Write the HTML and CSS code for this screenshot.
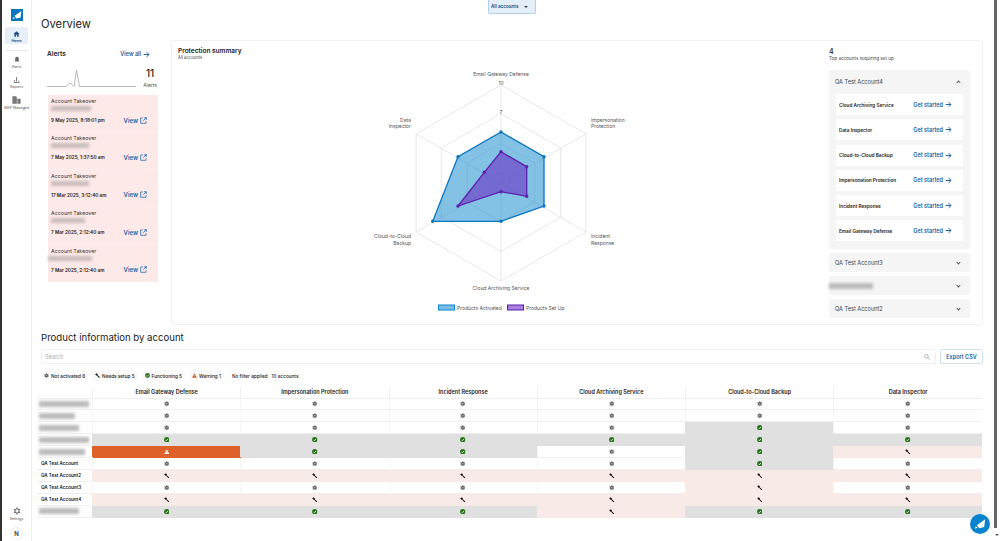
FILE: index.html
```html
<!DOCTYPE html>
<html lang="en">
<head>
    <meta charset="UTF-8">
    <meta name="viewport" content="width=device-width, initial-scale=1.0">
    <title>Overview</title>
    <link rel="stylesheet" href="styles.css">
</head>
<body>
    <svg class="defs" width="0" height="0">
        <symbol id="i-gear" viewBox="0 0 10 10"><circle cx="5" cy="5" r="3.7" fill="#666"/><circle cx="5" cy="5" r="1.2" fill="#c4c4c4"/><path d="M5 0.2V2M5 8V9.8M0.8 2.6L2.4 3.6M7.6 6.4L9.2 7.4M0.8 7.4L2.4 6.4M7.6 3.6L9.2 2.6" stroke="#666" stroke-width="1.3"/></symbol>
        <symbol id="i-gear-line" viewBox="0 0 10 10"><circle cx="5" cy="5" r="2.7" fill="none" stroke="#555" stroke-width="1.2"/><path d="M5 0.4V2.2M5 7.8V9.6M1 2.7L2.6 3.6M7.4 6.4L9 7.3M1 7.3L2.6 6.4M7.4 3.6L9 2.7" stroke="#555" stroke-width="1.1"/></symbol>
        <symbol id="i-ok" viewBox="0 0 10 10"><circle cx="5" cy="5" r="4.9" fill="#2a741c"/><path d="M2.6 5.1L4.3 6.8L7.4 3.5" fill="none" stroke="#e8f2e4" stroke-width="1.5"/></symbol>
        <symbol id="i-tool" viewBox="0 0 10 10"><path d="M0.4 2.4L3 0.4L5.6 2.6L5 4L9.8 8.2L8.2 9.8L3.8 5.2L2.4 5.2Z" fill="#1c1c1c"/></symbol>
        <symbol id="i-warn" viewBox="0 0 10 10"><path d="M5 0.6L9.8 9.4H0.2Z" fill="#d9541e"/><path d="M5 3.6V6.4M5 7.2V8.2" stroke="#fff" stroke-width="1"/></symbol>
        <symbol id="i-warn-w" viewBox="0 0 10 10"><path d="M5 0.6L9.8 9.4H0.2Z" fill="#fff"/><path d="M5 3.6V6.4M5 7.2V8.2" stroke="#e0602a" stroke-width="1"/></symbol>
        <symbol id="i-arrow" viewBox="0 0 10 10"><path d="M1 5H8.4M5.2 1.6L8.6 5L5.2 8.4" fill="none" stroke="#1b5fa5" stroke-width="1.4"/></symbol>
        <symbol id="i-open" viewBox="0 0 10 10"><path d="M4 1.4H1V9H8.6V6M5.6 1H9V4.4M9 1L4.6 5.4" fill="none" stroke="#1b6cb5" stroke-width="1.1"/></symbol>
        <symbol id="i-logo" viewBox="0 0 12 12"><path d="M1.6 10L2.4 8L4 9.2Z M3.4 7L10.4 2L9.6 8.6L5.4 9.6Z" fill="#fff"/></symbol>
    </svg>

    <div class="layout">
        <nav class="sidebar">
            <div class="logo"><svg width="12" height="12"><use href="#i-logo"/></svg></div>
            <div class="nav-item active">
                <svg width="7" height="7" viewBox="0 0 10 10"><path d="M5 0.5L10 5H8.6V9.6H6V6.4H4V9.6H1.4V5H0Z" fill="#1b4f8a"/></svg>
                <span>Home</span>
            </div>
            <div class="nav-line"></div>
            <div class="nav-item">
                <svg width="6" height="7" viewBox="0 0 10 10"><path d="M5 0.5C7.4 0.5 8 2.4 8 4.4V7L9.4 8.4H0.6L2 7V4.4C2 2.4 2.6 0.5 5 0.5Z" fill="#666"/></svg>
                <span>Alerts</span>
            </div>
            <div class="nav-item">
                <svg width="7" height="7" viewBox="0 0 10 10"><path d="M1 9.4H9.6M2 8V5.6M5 8V1.6M8 8V6.6" stroke="#666" stroke-width="1.2" fill="none"/></svg>
                <span>Reports</span>
            </div>
            <div class="nav-item">
                <svg width="9" height="8" viewBox="0 0 10 9"><path d="M0.4 0.4H4.6L5.4 1.6V8.6H0.4ZM6 3H9.6V8.6H6Z" fill="#777"/></svg>
                <span>MSP Managed</span>
            </div>
            <div class="nav-bottom">
                <div class="nav-item">
                    <svg width="8" height="8"><use href="#i-gear-line"/></svg>
                    <span>Settings</span>
                </div>
                <div class="avatar">N</div>
            </div>
        </nav>

        <main class="main">
            <div class="account-picker">All accounts <span class="caret"></span></div>
            <h1 class="page-title">Overview</h1>

            <div class="top-row">
                <section class="alerts">
                    <div class="alerts-head">
                        <h2>Alerts</h2>
                        <span class="link">View all <svg width="7" height="7"><use href="#i-arrow"/></svg></span>
                    </div>
                    <div class="alerts-chart">
                        <svg width="89" height="20" viewBox="0 0 89 20">
                            <path d="M0 18.5H19L23 15L25.5 17L27 18.5L29.5 2L32.5 18.5H89" fill="none" stroke="#aaa" stroke-width="0.8"/>
                        </svg>
                        <div class="alerts-count"><b>11</b><span>Alerts</span></div>
                    </div>
                    <div class="alert-list">
                        <div class="alert">
                            <div class="alert-name">Account Takeover</div>
                            <div class="blur blur-alert w40"></div>
                            <div class="alert-foot"><b>9 May 2025, 8:18:01 pm</b><span class="alert-view">View <svg width="7" height="7"><use href="#i-open"/></svg></span></div>
                        </div>
                        <div class="alert">
                            <div class="alert-name">Account Takeover</div>
                            <div class="blur blur-alert w38"></div>
                            <div class="alert-foot"><b>7 May 2025, 1:37:50 am</b><span class="alert-view">View <svg width="7" height="7"><use href="#i-open"/></svg></span></div>
                        </div>
                        <div class="alert">
                            <div class="alert-name">Account Takeover</div>
                            <div class="blur blur-alert w38"></div>
                            <div class="alert-foot"><b>17 Mar 2025, 3:12:40 am</b><span class="alert-view">View <svg width="7" height="7"><use href="#i-open"/></svg></span></div>
                        </div>
                        <div class="alert">
                            <div class="alert-name">Account Takeover</div>
                            <div class="blur blur-alert w34"></div>
                            <div class="alert-foot"><b>7 Mar 2025, 2:12:40 am</b><span class="alert-view">View <svg width="7" height="7"><use href="#i-open"/></svg></span></div>
                        </div>
                        <div class="alert">
                            <div class="alert-name">Account Takeover</div>
                            <div class="blur blur-alert w44"></div>
                            <div class="alert-foot"><b>7 Mar 2025, 2:12:40 am</b><span class="alert-view">View <svg width="7" height="7"><use href="#i-open"/></svg></span></div>
                        </div>
                    </div>
                </section>

                <section class="summary">
                    <div class="summary-left">
                        <h2>Protection summary</h2>
                        <div class="small tiny">All accounts</div>
                    </div>
                    <div class="radar">
                        <svg width="300" height="250" viewBox="350 70 300 250">
                            <g fill="none" stroke="#e2e2e2" stroke-width="0.8">
                                <polygon points="501,85 585.9,134 585.9,232 501,281 416.1,232 416.1,134"/>
                                <polygon points="501,113.5 560.7,148 560.7,217 501,251.5 441.3,217 441.3,148"/>
                                <polygon points="501,143.5 534.8,163 534.8,202 501,221.5 467.2,202 467.2,163"/>
                                <polygon points="501,172 509.7,177 509.7,188 501,193 492.3,188 492.3,177"/>
                                <path d="M501 85V281M416.1 134L585.9 232M585.9 134L416.1 232"/>
                            </g>
                            <polygon points="501,132 544,156.7 544,206 501,221.3 432.7,221.3 458,156.7" fill="#0a86cc" fill-opacity="0.5" stroke="#0a76bd" stroke-width="1.3"/>
                            <polygon points="501,151.7 526.7,166.7 526.7,196.3 501,191.7 458,206 484.3,172.3" fill="#6a22c0" fill-opacity="0.55" stroke="#5a1fae" stroke-width="1.3"/>
                            <g fill="#0a76bd">
                                <circle cx="501" cy="132" r="1.7"/><circle cx="544" cy="156.7" r="1.7"/><circle cx="544" cy="206" r="1.7"/><circle cx="501" cy="221.3" r="1.7"/><circle cx="432.7" cy="221.3" r="1.7"/><circle cx="458" cy="156.7" r="1.7"/>
                            </g>
                            <g fill="#5a1fae">
                                <circle cx="501" cy="151.7" r="1.7"/><circle cx="526.7" cy="166.7" r="1.7"/><circle cx="526.7" cy="196.3" r="1.7"/><circle cx="501" cy="191.7" r="1.7"/><circle cx="458" cy="206" r="1.7"/><circle cx="484.3" cy="172.3" r="1.7"/>
                            </g>
                            <g class="radar-text">
                                <text x="501" y="76" text-anchor="middle">Email Gateway Defense</text>
                                <text x="591" y="122">Impersonation</text>
                                <text x="591" y="128">Protection</text>
                                <text x="591" y="238">Incident</text>
                                <text x="591" y="244.5">Response</text>
                                <text x="501" y="290" text-anchor="middle">Cloud Archiving Service</text>
                                <text x="411" y="238" text-anchor="end">Cloud-to-Cloud</text>
                                <text x="411" y="244.5" text-anchor="end">Backup</text>
                                <text x="411" y="122" text-anchor="end">Data</text>
                                <text x="411" y="128" text-anchor="end">Inspector</text>
                                <text x="501" y="84.5" text-anchor="middle">10</text>
                                <text x="501" y="114" text-anchor="middle">7</text>
                            </g>
                            <rect x="438.5" y="305" width="16" height="5" fill="#7dbde6" stroke="#0a86cc"/>
                            <text class="radar-text" x="457" y="309.5">Products Activated</text>
                            <rect x="507.5" y="305" width="16" height="5" fill="#a97fe0" stroke="#5a1fae"/>
                            <text class="radar-text" x="526" y="309.5">Products Set Up</text>
                        </svg>
                    </div>
                    <div class="setup">
                        <div class="setup-num">4</div>
                        <div class="small">Top accounts requiring set up</div>
                        <div class="acc open">
                            <div class="acc-head">QA Test Account4 <span class="chev up"></span></div>
                            <div class="acc-items">
                                <div class="acc-item"><b>Cloud Archiving Service</b><span class="link">Get started <svg width="7" height="7"><use href="#i-arrow"/></svg></span></div>
                                <div class="acc-item"><b>Data Inspector</b><span class="link">Get started <svg width="7" height="7"><use href="#i-arrow"/></svg></span></div>
                                <div class="acc-item"><b>Cloud-to-Cloud Backup</b><span class="link">Get started <svg width="7" height="7"><use href="#i-arrow"/></svg></span></div>
                                <div class="acc-item"><b>Impersonation Protection</b><span class="link">Get started <svg width="7" height="7"><use href="#i-arrow"/></svg></span></div>
                                <div class="acc-item"><b>Incident Response</b><span class="link">Get started <svg width="7" height="7"><use href="#i-arrow"/></svg></span></div>
                                <div class="acc-item"><b>Email Gateway Defense</b><span class="link">Get started <svg width="7" height="7"><use href="#i-arrow"/></svg></span></div>
                            </div>
                        </div>
                        <div class="acc"><div class="acc-head">QA Test Account3 <span class="chev"></span></div></div>
                        <div class="acc"><div class="acc-head"><span class="blur blur-acc"></span> <span class="chev"></span></div></div>
                        <div class="acc"><div class="acc-head">QA Test Account2 <span class="chev"></span></div></div>
                    </div>
                </section>
            </div>

            <h1 class="table-title">Product information by account</h1>
            <div class="search-row">
                <div class="search"><span>Search</span>
                    <svg width="6" height="6" viewBox="0 0 10 10"><circle cx="4" cy="4" r="3" fill="none" stroke="#aaa" stroke-width="1.5"/><path d="M6 6L9.5 9.5" stroke="#aaa" stroke-width="1.5"/></svg>
                </div>
                <div class="export">Export CSV</div>
            </div>
            <div class="filters">
                <span class="chip"><svg width="5" height="5"><use href="#i-gear"/></svg> Not activated 6</span>
                <span class="chip"><svg width="5" height="5"><use href="#i-tool"/></svg> Needs setup 5</span>
                <span class="chip"><svg width="5" height="5"><use href="#i-ok"/></svg> Functioning 5</span>
                <span class="chip"><svg width="5" height="5"><use href="#i-warn"/></svg> Warning 1</span>
                <span class="filter-note">No filter applied</span>
                <span class="filter-note">10 accounts</span>
            </div>

            <table class="products">
                <thead>
                    <tr><th></th><th>Email Gateway Defense</th><th>Impersonation Protection</th><th>Incident Response</th><th>Cloud Archiving Service</th><th>Cloud-to-Cloud Backup</th><th>Data Inspector</th></tr>
                </thead>
                <tbody>
                    <tr>
                        <td class="name"><div class="blur blur-name n50"></div></td>
                        <td><svg><use href="#i-gear"/></svg></td><td><svg><use href="#i-gear"/></svg></td><td><svg><use href="#i-gear"/></svg></td><td><svg><use href="#i-gear"/></svg></td><td><svg><use href="#i-gear"/></svg></td><td><svg><use href="#i-gear"/></svg></td>
                    </tr>
                    <tr>
                        <td class="name"><div class="blur blur-name n36"></div></td>
                        <td><svg><use href="#i-gear"/></svg></td><td><svg><use href="#i-gear"/></svg></td><td><svg><use href="#i-gear"/></svg></td><td><svg><use href="#i-gear"/></svg></td><td><svg><use href="#i-gear"/></svg></td><td><svg><use href="#i-gear"/></svg></td>
                    </tr>
                    <tr>
                        <td class="name"><div class="blur blur-name n40"></div></td>
                        <td><svg><use href="#i-gear"/></svg></td><td><svg><use href="#i-gear"/></svg></td><td><svg><use href="#i-gear"/></svg></td><td><svg><use href="#i-gear"/></svg></td><td class="ok"><svg><use href="#i-ok"/></svg></td><td><svg><use href="#i-gear"/></svg></td>
                    </tr>
                    <tr>
                        <td class="name"><div class="blur blur-name n50"></div></td>
                        <td class="ok"><svg><use href="#i-ok"/></svg></td><td class="ok"><svg><use href="#i-ok"/></svg></td><td class="ok"><svg><use href="#i-ok"/></svg></td><td class="ok"><svg><use href="#i-ok"/></svg></td><td class="ok"><svg><use href="#i-ok"/></svg></td><td class="ok"><svg><use href="#i-ok"/></svg></td>
                    </tr>
                    <tr>
                        <td class="name"><div class="blur blur-name n46"></div></td>
                        <td class="warn"><svg><use href="#i-warn-w"/></svg></td><td class="ok"><svg><use href="#i-ok"/></svg></td><td class="ok"><svg><use href="#i-ok"/></svg></td><td><svg><use href="#i-gear"/></svg></td><td class="ok"><svg><use href="#i-ok"/></svg></td><td class="setup-cell"><svg><use href="#i-tool"/></svg></td>
                    </tr>
                    <tr>
                        <td class="name">QA Test Account</td>
                        <td><svg><use href="#i-gear"/></svg></td><td><svg><use href="#i-gear"/></svg></td><td><svg><use href="#i-gear"/></svg></td><td><svg><use href="#i-gear"/></svg></td><td class="ok"><svg><use href="#i-ok"/></svg></td><td><svg><use href="#i-gear"/></svg></td>
                    </tr>
                    <tr>
                        <td class="name">QA Test Account2</td>
                        <td class="setup-cell"><svg><use href="#i-tool"/></svg></td><td class="setup-cell"><svg><use href="#i-tool"/></svg></td><td class="setup-cell"><svg><use href="#i-tool"/></svg></td><td class="setup-cell"><svg><use href="#i-tool"/></svg></td><td class="setup-cell"><svg><use href="#i-tool"/></svg></td><td class="setup-cell"><svg><use href="#i-tool"/></svg></td>
                    </tr>
                    <tr>
                        <td class="name">QA Test Account3</td>
                        <td><svg><use href="#i-gear"/></svg></td><td><svg><use href="#i-gear"/></svg></td><td><svg><use href="#i-gear"/></svg></td><td><svg><use href="#i-gear"/></svg></td><td class="setup-cell"><svg><use href="#i-tool"/></svg></td><td><svg><use href="#i-gear"/></svg></td>
                    </tr>
                    <tr>
                        <td class="name">QA Test Account4</td>
                        <td class="setup-cell"><svg><use href="#i-tool"/></svg></td><td class="setup-cell"><svg><use href="#i-tool"/></svg></td><td class="setup-cell"><svg><use href="#i-tool"/></svg></td><td class="setup-cell"><svg><use href="#i-tool"/></svg></td><td class="setup-cell"><svg><use href="#i-tool"/></svg></td><td class="setup-cell"><svg><use href="#i-tool"/></svg></td>
                    </tr>
                    <tr>
                        <td class="name"><div class="blur blur-name n40"></div></td>
                        <td class="ok"><svg><use href="#i-ok"/></svg></td><td class="ok"><svg><use href="#i-ok"/></svg></td><td class="ok"><svg><use href="#i-ok"/></svg></td><td class="setup-cell"><svg><use href="#i-tool"/></svg></td><td class="ok"><svg><use href="#i-ok"/></svg></td><td class="ok"><svg><use href="#i-ok"/></svg></td>
                    </tr>
                </tbody>
            </table>
        </main>

        <div class="scrollbar"><span class="scroll-thumb"></span><span class="scroll-arrow"></span></div>
    </div>

    <div class="fab"><svg width="14" height="14"><use href="#i-logo"/></svg></div>
</body>
</html>
```

FILE: styles.css
```css
* {
    box-sizing: border-box;
}
html, body {
    height: 100%;
}
body {
    margin: 0;
    font-family: Inter, "Liberation Sans", sans-serif;
    font-size: 5.5px;
    color: #222;
    background-color: #fff;
    overflow: hidden;
}
.defs {
    position: absolute;
}
.layout {
    display: flex;
    height: 541px;
    border-left: 2px solid #333;
}
b {
    font-weight: 600;
}

/* left nav */
.sidebar {
    width: 30px;
    flex-shrink: 0;
    border-right: 1px solid #f0f0f0;
    display: flex;
    flex-direction: column;
    align-items: center;
    padding-top: 9px;
}
.logo {
    width: 12px;
    height: 12px;
    background-color: #0a76bd;
    margin-bottom: 6px;
}
.nav-item {
    width: 23px;
    display: flex;
    flex-direction: column;
    align-items: center;
    gap: 2px;
    font-size: 3.6px;
    color: #555;
    padding: 4px 0 1px;
    margin-bottom: 2px;
    white-space: nowrap;
}
.nav-item.active {
    height: 17px;
    background-color: #e6eff7;
    color: #1b4f8a;
    font-weight: 600;
    margin-bottom: 6px;
}
.nav-line {
    width: 22px;
    border-top: 1px solid #e8e8e8;
    margin-bottom: 1px;
}
.nav-bottom {
    margin-top: auto;
    padding-bottom: 1px;
    display: flex;
    flex-direction: column;
    align-items: center;
}
.nav-bottom .nav-item {
    margin-bottom: 5px;
}
.avatar {
    width: 13px;
    height: 13px;
    border-radius: 50%;
    border: 1px solid #eee;
    display: flex;
    align-items: center;
    justify-content: center;
    font-size: 6px;
    font-weight: 600;
    color: #333;
}

/* main area */
.main {
    flex: 1;
    padding: 14px 10px 0 9px;
    min-width: 0;
}
.account-picker {
    position: absolute;
    left: 488px;
    top: 0;
    width: 48px;
    height: 14px;
    background-color: #e3eef8;
    border: 1px solid #b4d0e8;
    border-top: none;
    border-radius: 0 0 2px 2px;
    color: #1b4f8a;
    font-weight: 600;
    font-size: 4.6px;
    display: flex;
    align-items: center;
    justify-content: space-between;
    padding: 0 7px 0 2px;
}
.caret {
    border-left: 2px solid transparent;
    border-right: 2px solid transparent;
    border-top: 2px solid #444;
}
.page-title {
    font-size: 11.2px;
    font-weight: 400;
    margin: 0;
    height: 20px;
    line-height: 20px;
}
.top-row {
    display: flex;
    gap: 6px;
    margin-top: 6px;
    height: 285px;
}
h2 {
    font-size: 6.5px;
    font-weight: 600;
    margin: 0;
}
.link {
    color: #1b5fa5;
    font-weight: 600;
    font-size: 5.5px;
    display: flex;
    align-items: center;
    gap: 2px;
    white-space: nowrap;
}

/* alerts */
.alerts {
    width: 124px;
    flex-shrink: 0;
    padding: 10px 7px 0 6px;
}
.alerts-head {
    display: flex;
    justify-content: space-between;
    align-items: center;
    padding-right: 8px;
}
.alerts-chart {
    display: flex;
    justify-content: space-between;
    margin-top: 9px;
    height: 28px;
}
.alerts-chart svg {
    margin-top: 1px;
}
.alerts-count {
    display: flex;
    flex-direction: column;
    align-items: center;
    padding-right: 1px;
    gap: 3px;
}
.alerts-count b {
    font-size: 10px;
    font-weight: 500;
    line-height: 12px;
}
.alerts-count span {
    font-size: 5px;
    color: #555;
}
.alert-list {
    margin-left: 1px;
    background-color: #fde9e8;
    height: 187px;
}
.alert {
    height: 37.4px;
    padding: 2px 3px 0;
    border-bottom: 1px solid #fbeeee;
}
.alert-name {
    font-size: 5.3px;
    line-height: 8px;
    color: #333;
}
.alert-foot {
    display: flex;
    justify-content: space-between;
    align-items: center;
    margin-top: 5.5px;
    padding-right: 8px;
}
.alert-foot b {
    font-size: 4.7px;
}
.alert-view {
    display: flex;
    align-items: center;
    gap: 2px;
    color: #1b5fa5;
    font-weight: 600;
    font-size: 6px;
}
.blur {
    background-color: #c9bcbc;
    filter: blur(1.5px);
}
.blur-alert {
    height: 5px;
    margin-top: 1px;
}
.w34 { width: 34px; }
.w38 { width: 38px; }
.w40 { width: 40px; }
.w44 { width: 44px; margin-left: -3px; }

/* protection summary */
.summary {
    flex: 1;
    min-width: 0;
    border: 1px solid #f1f1f1;
    border-radius: 3px;
    display: flex;
    padding: 6px 12px 0 6px;
}
.summary-left {
    width: 110px;
    flex-shrink: 0;
}
.small {
    font-size: 4.6px;
    color: #444;
}
.small.tiny {
    font-size: 4.2px;
}
.radar {
    width: 300px;
    flex-shrink: 0;
    margin-left: 62px;
    margin-top: 23px;
}
.radar-text,
.radar-text text {
    font-size: 5px;
    fill: #555;
}
.setup {
    margin-left: auto;
    width: 141px;
}
.setup-num {
    font-size: 7px;
    font-weight: 500;
    line-height: 9px;
    color: #222;
}
.acc {
    background-color: #f5f5f5;
    border-radius: 2px;
    margin-top: 4px;
}
.acc.open {
    margin-top: 9px;
}
.acc-head {
    height: 19px;
    display: flex;
    align-items: center;
    justify-content: space-between;
    padding: 0 10px 0 6px;
    font-size: 5.6px;
    color: #444;
}
.acc.open .acc-head {
    height: 24px;
}
.chev {
    width: 3px;
    height: 3px;
    border-right: 1px solid #555;
    border-bottom: 1px solid #555;
    transform: rotate(45deg);
    margin-top: -1px;
}
.chev.up {
    transform: rotate(225deg);
    margin-top: 1px;
}
.blur-acc {
    width: 44px;
    height: 6px;
    margin-left: -6px;
    background-color: #bbb;
}
.acc-items {
    padding: 0 7px 8px;
    display: flex;
    flex-direction: column;
    gap: 4.3px;
}
.acc-item {
    height: 21px;
    background-color: #fff;
    border-radius: 1px;
    display: flex;
    align-items: center;
    justify-content: space-between;
    padding: 0 11px 0 3px;
}
.acc-item b {
    font-size: 4.7px;
}

/* product table */
.table-title {
    font-size: 9.6px;
    font-weight: 400;
    margin: 6px 0 0;
    height: 14px;
    line-height: 14px;
}
.search-row {
    display: flex;
    gap: 4px;
    margin-top: 4px;
    height: 15px;
}
.search {
    flex: 1;
    border: 1px solid #f0f0f0;
    border-radius: 2px;
    display: flex;
    align-items: center;
    justify-content: space-between;
    padding: 0 5px 0 3px;
    color: #aaa;
}
.export {
    width: 43px;
    border: 1px solid #cfe0ef;
    border-radius: 2px;
    color: #1b5fa5;
    font-weight: 600;
    display: flex;
    align-items: center;
    justify-content: center;
}
.filters {
    display: flex;
    align-items: center;
    margin-top: 6px;
    height: 11px;
    gap: 4px;
    font-size: 4.7px;
    font-weight: 500;
}
.chip {
    display: flex;
    align-items: center;
    gap: 2px;
    height: 11px;
    padding: 0 3px;
    border-radius: 6px;
    background-color: #fafafa;
}
.chip + .filter-note {
    margin-left: 4px;
}
.products {
    width: 945px;
    margin: 6px 0 0 -4px;
    border-collapse: collapse;
    table-layout: fixed;
}
.products th:first-child {
    width: 55.5px;
    border-left: none;
}
.products th {
    height: 11px;
    padding: 0;
    font-size: 5.5px;
    font-weight: 600;
    border-left: 1px solid #f0f0f0;
    border-bottom: 1px solid #eee;
}
.products td {
    height: 11.9px;
    padding: 0;
    text-align: center;
    border-left: 1px solid #f5f5f5;
    border-bottom: 1px solid #f0f0f0;
    line-height: 0;
}
.products td svg {
    width: 5.5px;
    height: 5.5px;
    vertical-align: middle;
}
.products td.name {
    text-align: left;
    border-left: none;
    font-size: 4.6px;
    font-weight: 600;
    line-height: 11px;
    padding-left: 4px;
}
.products td.ok {
    background-color: #e0e0e0;
    border-left-color: #e0e0e0;
    border-bottom-color: #e0e0e0;
}
.products td.warn {
    background-color: #e0602a;
    border-left-color: #e0602a;
    border-bottom-color: #e0602a;
}
.products td.setup-cell {
    background-color: #f8ebe7;
    border-left-color: #f8ebe7;
    border-bottom-color: #f8ebe7;
}
.blur-name {
    height: 6px;
    margin-left: -2px;
    background-color: #bbb;
}
.n36 { width: 36px; }
.n40 { width: 40px; }
.n46 { width: 46px; }
.n50 { width: 50px; }

/* scrollbar + chat button */
.scrollbar {
    width: 7px;
    flex-shrink: 0;
    padding-left: 1px;
}
.scroll-thumb {
    display: block;
    width: 3px;
    height: 528px;
    background-color: #666;
}
.scroll-arrow {
    display: block;
    width: 0;
    margin: 6px 0 0 1px;
    border-left: 2px solid transparent;
    border-right: 2px solid transparent;
    border-top: 2px solid #555;
}
.fab {
    position: absolute;
    left: 970px;
    top: 514px;
    width: 20px;
    height: 20px;
    border-radius: 50%;
    background-color: #0a82cc;
    display: flex;
    align-items: center;
    justify-content: center;
}
```
